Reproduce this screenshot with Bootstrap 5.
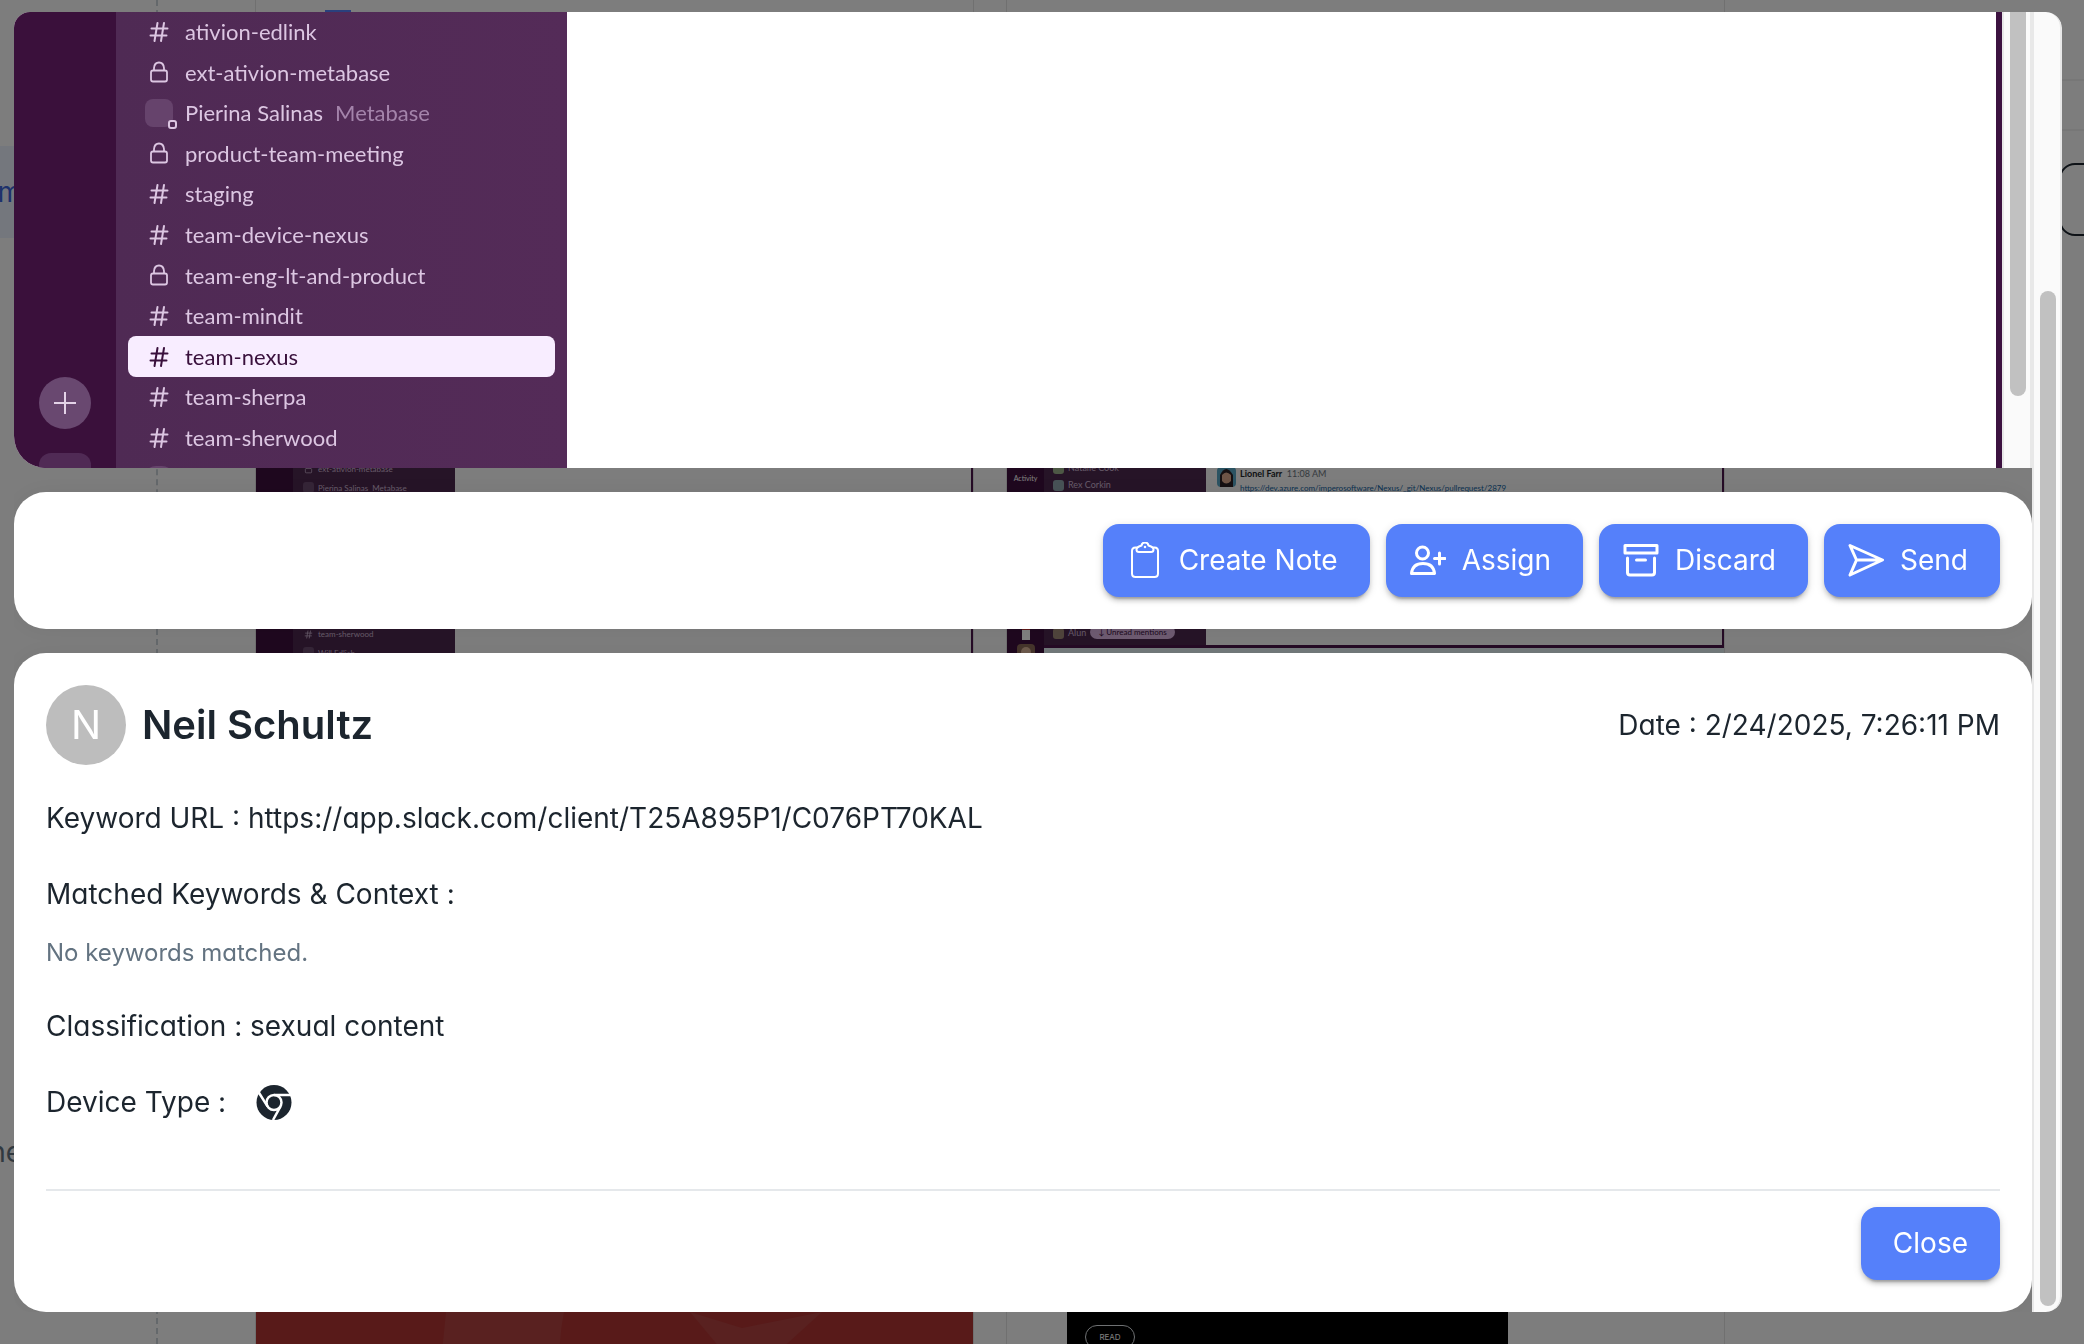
<!DOCTYPE html>
<html lang="en">
<head>
<meta charset="utf-8">
<meta name="viewport" content="width=device-width, initial-scale=1">
<title>Capture review</title>
<link href="https://cdn.jsdelivr.net/npm/bootstrap@5.3.0/dist/css/bootstrap.min.css" rel="stylesheet">
<style>
:root{--ink:#1c252e;--soft:#637381;--brand:#5580fa;--rail:#3a103b;--aub:#502a55}
body{font-family:Inter,"Open Sans",sans-serif;color:var(--ink);background:#fafafa;font-size:28px;line-height:42px}
/* page underneath */
.app-page{height:100vh}
.side-nav{width:158px;flex:none;border-right:2px dashed #c9d0d6;padding-top:146px}
.side-item{height:92px;line-height:92px;background:#e9effa;color:#3b63d8}
.side-cell{width:22px}
.side-note{margin-top:893px;color:#637381}
.tiles{padding:0 0 0 97px;gap:32px}
.tile{width:719px;flex:none;border:1px solid #e0e0e0;border-width:0 1px}
.tile-tab{height:12px;padding-left:69px}
.tile-tab span{width:26px;height:2px;background:var(--brand)}
.thumb{height:1160px;font-family:Lato,sans-serif;font-size:9px;line-height:12px}
.thumb-rail{width:37px;background:#3d0f3d;color:#fff}
.thumb-side{width:162px;background:#4c284e;color:#cdb5d2}
.thumb-channels{padding:448px 0 0 10px;font-size:8px}
.thumb-people{padding:448px 0 0 9px}
.thumb-list{height:202px}
.thumb-edge{border-right:2px solid #4a154b}
.thumb-post{padding:455px 0 0 11px}
.thumb-post div{line-height:14px}
.thumb-post a{font-size:8px;color:#1264a3}
.mention-pill{background:#dcb6e2;color:#3a103b;font-size:8px;line-height:14px;padding:0 8px}
.dot-avatar{width:11px;height:11px;border-radius:3px;background:#6a4a6e}
.side-glyph{width:11px;height:11px}
.poster{height:200px}
.poster-dark{width:441px;background:#000;margin-left:60px;padding:153px 0 0 18px}
.read-pill{width:50px;height:24px;font-size:8px;line-height:22px}
.edge-tools{flex:none;width:560px;margin-top:79px;border-top:2px solid #eee}
.edge-tools .edge-line{height:50px;border-bottom:2px solid #eee}
.edge-tools button{height:73px;width:200px;margin:32px 0 0 334px;border:2px solid #1c252e;border-radius:16px;background:none}
.shade{background:rgba(0,0,0,.5)}
/* dialog */
.review{inset:12px 22px 32px 14px;border-radius:16px}
.pane-stack{gap:24px}
.shot{min-height:0;border-bottom-left-radius:32px;font-family:Lato,sans-serif;font-size:22px;line-height:28px}
.shot-rail{width:102px;background:var(--rail);padding-top:365px}
.plus{width:52px;height:52px;background:#694870}
.rail-box{width:52px;height:40px;border-radius:12px;background:#502a55}
.shot-side{width:451px;background:linear-gradient(90deg,#4f2a54,#542b58);color:#dcc6e2;padding:0 12px}
.shot-list{height:446px}
.chan{padding-left:17px;border-radius:8px;min-height:0}
.chan svg,.chan .face{width:28px;height:28px;margin-right:12px}
.chan.active-chan{background:#f8edff;color:#39103c}
.face{border-radius:8px;background:#66436c}
.face::after{content:"";position:absolute;right:-4px;bottom:-2px;width:9px;height:9px;border:2px solid #dcc6e2;border-radius:3px;background:#502a55}
.dimmed{color:#a484ab}
.peek{width:30px;height:30px;margin-left:16px;border-radius:12px;background:#66436c}
.shot-main{border-right:6px solid #3c1240}
.track{width:30px;background:#fafafa;border:solid #e8e8e8;border-width:0 2px;padding:0 4px 0 6px}
.track-thumb{width:16px;border-radius:8px;background:#c1c1c1}
.inner-thumb{height:384px;border-radius:0 0 8px 8px}
.outer-track{border-radius:0 16px 16px 0;padding-top:279px;padding-bottom:6px}
.sheet{border-radius:32px;padding:32px;box-shadow:0 0 24px rgba(0,0,0,.06)}
.act{height:73px;padding:0 32px 2px;border:0;border-radius:16px;background:var(--brand);color:#fff;font-size:28px;line-height:42px;box-shadow:0 6px 2px -4px rgba(0,0,0,.2),0 4px 4px rgba(0,0,0,.14),0 2px 10px rgba(0,0,0,.12)}
.act:hover{background:#4570ea;color:#fff}
.act-icon{padding-left:24px;gap:16px}
.act svg{width:36px;height:36px;fill:none;stroke:#fff;stroke-width:3;stroke-linejoin:round;stroke-linecap:round}
.details{font-feature-settings:"cv11"}
.initial{width:80px;height:80px;background:#bdbdbd;font-size:40px;font-weight:400}
.person{font-size:40px;line-height:60px;font-weight:600}
.facts{margin-top:32px;gap:34px}
.none-yet{font-size:24px;line-height:36px;margin-top:20px;color:var(--soft)}
.device-mark{width:36px;height:36px;margin-left:30px}
.sheet-foot{margin-top:66px;padding-top:16px;border-top:2px solid #e5e8eb}
</style>
<script src="https://cdn.jsdelivr.net/npm/bootstrap@5.3.0/dist/js/bootstrap.bundle.min.js"></script>
</head>
<body class="overflow-hidden">
<svg class="d-none">
  <symbol id="hash" viewBox="0 0 28 28"><path d="M12.500 5 9.500 23M19 5 16 23M6.500 10.500H22.500M5.500 17.500H21.500" fill="none" stroke="currentColor" stroke-width="2" stroke-linecap="round"/></symbol>
  <symbol id="lock" viewBox="0 0 28 28"><path d="M8 11.500H20Q22 11.500 22 13.500V20.500Q22 22.500 20 22.500H8Q6 22.500 6 20.500V13.500Q6 11.500 8 11.500ZM9 11.500V9Q9.500 3.500 14 3.500T19 9V11.500" fill="none" stroke="currentColor" stroke-width="1.800"/></symbol>
</svg>

<div class="app-page d-flex overflow-hidden" aria-hidden="true">
  <nav class="side-nav">
    <div class="side-item"><div class="side-cell d-flex justify-content-end">m</div></div>
    <div class="side-note side-cell d-flex justify-content-end">ne</div>
  </nav>
  <main class="tiles d-flex">
    <section class="tile">
      <div class="tile-tab d-flex align-items-end"><span></span></div>
      <div class="thumb d-flex">
        <div class="thumb-rail"></div>
        <div class="thumb-side thumb-channels">
          <div class="thumb-list d-flex flex-column">
            <div class="d-flex flex-fill align-items-center gap-1"><svg class="side-glyph"><use href="#lock"/></svg>ext-ativion-metabase</div>
            <div class="d-flex flex-fill align-items-center gap-1"><span class="dot-avatar"></span>Pierina Salinas&nbsp; Metabase</div>
            <div class="flex-fill">&nbsp;</div><div class="flex-fill">&nbsp;</div><div class="flex-fill">&nbsp;</div><div class="flex-fill">&nbsp;</div><div class="flex-fill">&nbsp;</div><div class="flex-fill">&nbsp;</div><div class="flex-fill">&nbsp;</div>
            <div class="d-flex flex-fill align-items-center gap-1"><svg class="side-glyph"><use href="#hash"/></svg>team-sherwood</div>
            <div class="d-flex flex-fill align-items-center gap-1"><span class="dot-avatar"></span>Will Edlich</div>
          </div>
        </div>
        <div class="thumb-edge flex-fill"></div>
      </div>
      <svg class="poster d-block w-100" viewBox="0 0 717 200" preserveAspectRatio="none"><path fill="#b03432" d="M0 0H717V200H0Z"/><path fill="#b24240" d="M190 140H308Q302 170 304 200H184ZM434 140 486 156 566 140 500 200H484Z"/></svg>
    </section>
    <section class="tile">
      <div class="tile-tab"></div>
      <div class="thumb d-flex">
        <div class="thumb-rail text-center" style="padding-top:460px;font-size:7px">Activity
          <div class="d-flex flex-column align-items-center" style="padding-top:144px;gap:4px"><svg width="8" height="12"><path fill="#fff" d="M0 0H8V12H0Z"/><path fill="#b33" d="M0 0H8V2H0Z"/></svg><svg width="18" height="18"><rect width="18" height="18" rx="4" fill="#8c6a58"/><circle cx="9" cy="8" r="5" fill="#dcb59a"/></svg></div>
        </div>
        <div class="d-flex flex-column flex-fill">
          <div class="d-flex" style="height:633px">
            <div class="thumb-side thumb-people">
              <div class="d-flex align-items-center gap-1" style="height:16px"><span class="dot-avatar" style="background:#9bb08a"></span>Natalie Cook</div>
              <div class="d-flex align-items-center gap-1" style="height:18px"><span class="dot-avatar" style="background:#8fa5ad"></span>Rex Corkin</div>
              <div class="d-flex align-items-end gap-1" style="height:145px"><span class="dot-avatar" style="background:#a08a78"></span>Alun<span class="mention-pill rounded-pill">↓ Unread mentions</span></div>
            </div>
            <div class="thumb-edge thumb-post flex-fill d-flex gap-1">
              <svg width="19" height="20"><rect width="19" height="20" rx="4" fill="#57a6c4"/><path fill="#2a2024" d="M3 20V8Q9-4 16 8V20Z"/><path fill="#dba98c" d="M5 8Q9 3 14 8V14Q9 19 5 14Z"/></svg>
              <div class="text-dark"><div><b>Lionel Farr</b>&nbsp; <span class="text-secondary">11:08 AM</span></div><a class="text-decoration-none d-block" href="#">https://dev.azure.com/imperosoftware/Nexus/_git/Nexus/pullrequest/2879</a></div>
            </div>
          </div>
          <div class="flex-fill" style="border-top:3px solid #4a154b;background:#e6f4f7"></div>
        </div>
      </div>
      <div class="poster poster-dark"><div class="read-pill text-white border rounded-pill text-center">READ</div></div>
    </section>
  </main>
  <aside class="edge-tools"><div class="edge-line"></div><button type="button" aria-label="Filter"></button></aside>
</div>
<div class="shade position-fixed top-0 start-0 w-100 h-100"></div>

<div class="review position-fixed d-flex overflow-hidden" role="dialog" aria-labelledby="person">
  <div class="pane-stack d-flex flex-column flex-fill">
    <section class="shot d-flex flex-fill overflow-hidden bg-white">
      <div class="shot-rail d-flex flex-column align-items-center flex-shrink-0">
        <div class="plus rounded-circle d-flex align-items-center justify-content-center flex-shrink-0"><svg width="24" height="24"><path d="M12 1V23M1 12H23" stroke="#e4d3e8" stroke-width="2"/></svg></div>
        <div class="rail-box flex-shrink-0 mt-4"></div>
      </div>
      <div class="shot-side flex-shrink-0">
        <div class="shot-list d-flex flex-column">
          <div class="chan d-flex align-items-center flex-fill"><svg><use href="#hash"/></svg>ativion-edlink</div>
          <div class="chan d-flex align-items-center flex-fill"><svg><use href="#lock"/></svg>ext-ativion-metabase</div>
          <div class="chan d-flex align-items-center flex-fill"><span class="face position-relative"></span>Pierina Salinas<span class="dimmed ms-2 ps-1">Metabase</span></div>
          <div class="chan d-flex align-items-center flex-fill"><svg><use href="#lock"/></svg>product-team-meeting</div>
          <div class="chan d-flex align-items-center flex-fill"><svg><use href="#hash"/></svg>staging</div>
          <div class="chan d-flex align-items-center flex-fill"><svg><use href="#hash"/></svg>team-device-nexus</div>
          <div class="chan d-flex align-items-center flex-fill"><svg><use href="#lock"/></svg>team-eng-lt-and-product</div>
          <div class="chan d-flex align-items-center flex-fill"><svg><use href="#hash"/></svg>team-mindit</div>
          <div class="chan active-chan d-flex align-items-center flex-fill"><svg><use href="#hash"/></svg>team-nexus</div>
          <div class="chan d-flex align-items-center flex-fill"><svg><use href="#hash"/></svg>team-sherpa</div>
          <div class="chan d-flex align-items-center flex-fill"><svg><use href="#hash"/></svg>team-sherwood</div>
        </div>
        <div class="peek mt-2"></div>
      </div>
      <div class="shot-main flex-fill"></div>
      <div class="track"><div class="track-thumb inner-thumb"></div></div>
    </section>

    <section class="sheet bg-white d-flex justify-content-end gap-3">
      <button type="button" class="btn act act-icon d-flex align-items-center"><svg viewBox="0 0 36 36"><path stroke-width="2" d="M9.500 5.500H8.500Q5 5.500 5 9V31.500Q5 35 8.500 35H27.500Q31 35 31 31.500V9Q31 5.500 27.500 5.500H26.500M12 4.500 14.500 3.500Q15 .5 18 .5T21.500 3.500L24 4.500Q26.500 5.500 26.500 7.500 26.500 10 24 10H12Q9.500 10 9.500 7.500 9.500 5.500 12 4.500Z"/><circle cx="18" cy="5" r=".5" stroke-width="1.500"/></svg>Create Note</button>
      <button type="button" class="btn act act-icon d-flex align-items-center"><svg viewBox="0 0 36 36"><circle cx="12.500" cy="11" r="6"/><path d="M1.500 31.500Q2.500 21.500 13 21.500T24.500 31.500ZM29.500 11V22M24.500 16.500H35"/></svg>Assign</button>
      <button type="button" class="btn act act-icon d-flex align-items-center"><svg viewBox="0 0 36 36"><path d="M2 3.500H34V11H2ZM4.500 16V30.500Q4.500 33 7 33H29Q31.500 33 31.500 30.500V16M13.500 18H22.500"/></svg>Discard</button>
      <button type="button" class="btn act act-icon d-flex align-items-center"><svg viewBox="0 0 36 36"><path d="M2 3.500 34.500 18 2 33 8.500 18ZM8.500 18H34"/></svg>Send</button>
    </section>

    <section class="sheet details bg-white">
      <header class="d-flex align-items-center">
        <div class="initial rounded-circle text-white d-flex align-items-center justify-content-center me-3">N</div>
        <h1 class="person m-0 flex-fill" id="person">Neil Schultz</h1>
        <time>Date : 2/24/2025, 7:26:11 PM</time>
      </header>
      <div class="facts d-flex flex-column">
        <div>Keyword URL : https://app.slack.com/client/T25A895P1/C076PT70KAL</div>
        <div>Matched Keywords &amp; Context :<div class="none-yet">No keywords matched.</div></div>
        <div>Classification : sexual content</div>
        <div class="d-flex align-items-center">Device Type :
          <svg class="device-mark" viewBox="0 0 36 36" role="img" aria-label="Chrome"><circle cx="18" cy="18.500" r="17.500" fill="#1c252e"/><circle cx="18" cy="18.500" r="7.500" fill="none" stroke="#fff" stroke-width="2.500"/><path d="M18 11H35M11.500 22.300 2.500 8M24.500 22.300 17 36" fill="none" stroke="#fff" stroke-width="2.500"/></svg>
        </div>
      </div>
      <footer class="sheet-foot d-flex justify-content-end"><button type="button" class="btn act">Close</button></footer>
    </section>
  </div>
  <div class="track outer-track flex-shrink-0"><div class="track-thumb h-100"></div></div>
</div>
</body>
</html>
